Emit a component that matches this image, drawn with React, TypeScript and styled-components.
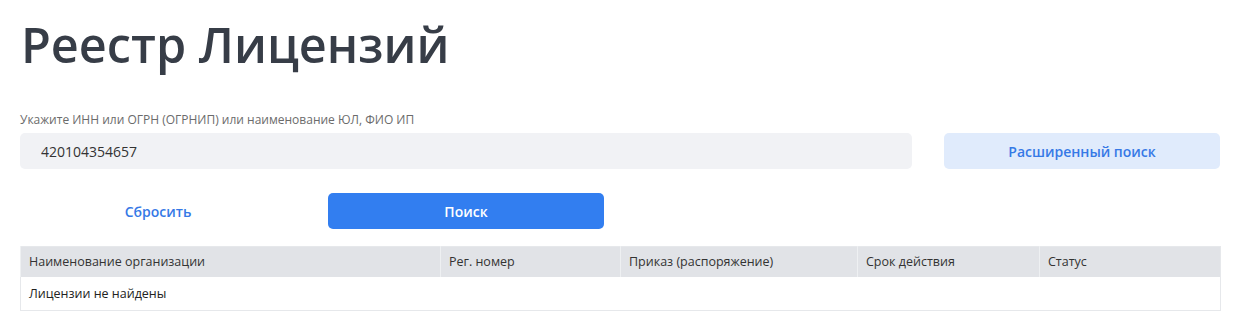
import styled, { createGlobalStyle } from "styled-components";

const GlobalStyle = createGlobalStyle`
  body {
    margin: 0;
    background: #ffffff;
    font-family: "Open Sans", "Noto Sans", sans-serif;
    color: #333;
  }
`;

const Page = styled.div`
  width: 1200px;
  padding: 0 20px;
`;

const Title = styled.h1`
  margin: 0;
  padding: 12px 0 0 1px;
  font-size: 48.6px;
  line-height: 64px;
  font-weight: 600;
  color: #373d47;
`;

const Label = styled.div`
  margin-top: 36px;
  font-size: 12px;
  line-height: 16px;
  color: #6b6b6b;
`;

const Grid = styled.div`
  display: grid;
  grid-template-columns: repeat(4, 276px);
  column-gap: 32px;
  row-gap: 24px;
  margin-top: 5px;
`;

const Input = styled.input`
  grid-column: span 3;
  height: 36px;
  box-sizing: border-box;
  border: none;
  border-radius: 5px;
  background: #f1f2f5;
  padding: 0 21px;
  font-family: inherit;
  font-size: 14px;
  color: #333;
  outline: none;
`;

const Button = styled.button<{ $variant: "primary" | "soft" | "text" }>`
  height: 36px;
  border: none;
  border-radius: 5px;
  font-family: inherit;
  font-size: 14px;
  font-weight: 600;
  cursor: pointer;
  background: ${(p) =>
    p.$variant === "primary" ? "#327ef0" : p.$variant === "soft" ? "#e0ebfc" : "transparent"};
  color: ${(p) => (p.$variant === "primary" ? "#ffffff" : "#3679e6")};
`;

const Table = styled.table`
  width: 1200px;
  margin-top: 17px;
  border-collapse: collapse;
  table-layout: fixed;
  font-size: 12.5px;
  border: 1px solid #e6e8eb;
`;

const Th = styled.th<{ $w: number }>`
  box-sizing: border-box;
  width: ${(p) => p.$w}px;
  height: 30px;
  padding: 0 8px;
  text-align: left;
  font-weight: 400;
  background: #e1e3e7;
  border-left: 1px solid #eef0f2;
  color: #333;
`;

const Td = styled.td`
  height: 33px;
  padding: 0 8px;
  color: #222;
`;

const columns: [string, number][] = [
  ["Наименование организации", 420],
  ["Рег. номер", 180],
  ["Приказ (распоряжение)", 237],
  ["Срок действия", 182],
  ["Статус", 181],
];

export default function App() {
  return (
    <>
      <GlobalStyle />
      <Page>
        <Title>Реестр Лицензий</Title>
        <Label>Укажите ИНН или ОГРН (ОГРНИП) или наименование ЮЛ, ФИО ИП</Label>
        <Grid>
          <Input defaultValue="420104354657" />
          <Button $variant="soft">Расширенный поиск</Button>
          <Button $variant="text">Сбросить</Button>
          <Button $variant="primary">Поиск</Button>
        </Grid>
        <Table>
          <thead>
            <tr>
              {columns.map(([name, w]) => (
                <Th key={name} $w={w}>
                  {name}
                </Th>
              ))}
            </tr>
          </thead>
          <tbody>
            <tr>
              <Td colSpan={5}>Лицензии не найдены</Td>
            </tr>
          </tbody>
        </Table>
      </Page>
    </>
  );
}
